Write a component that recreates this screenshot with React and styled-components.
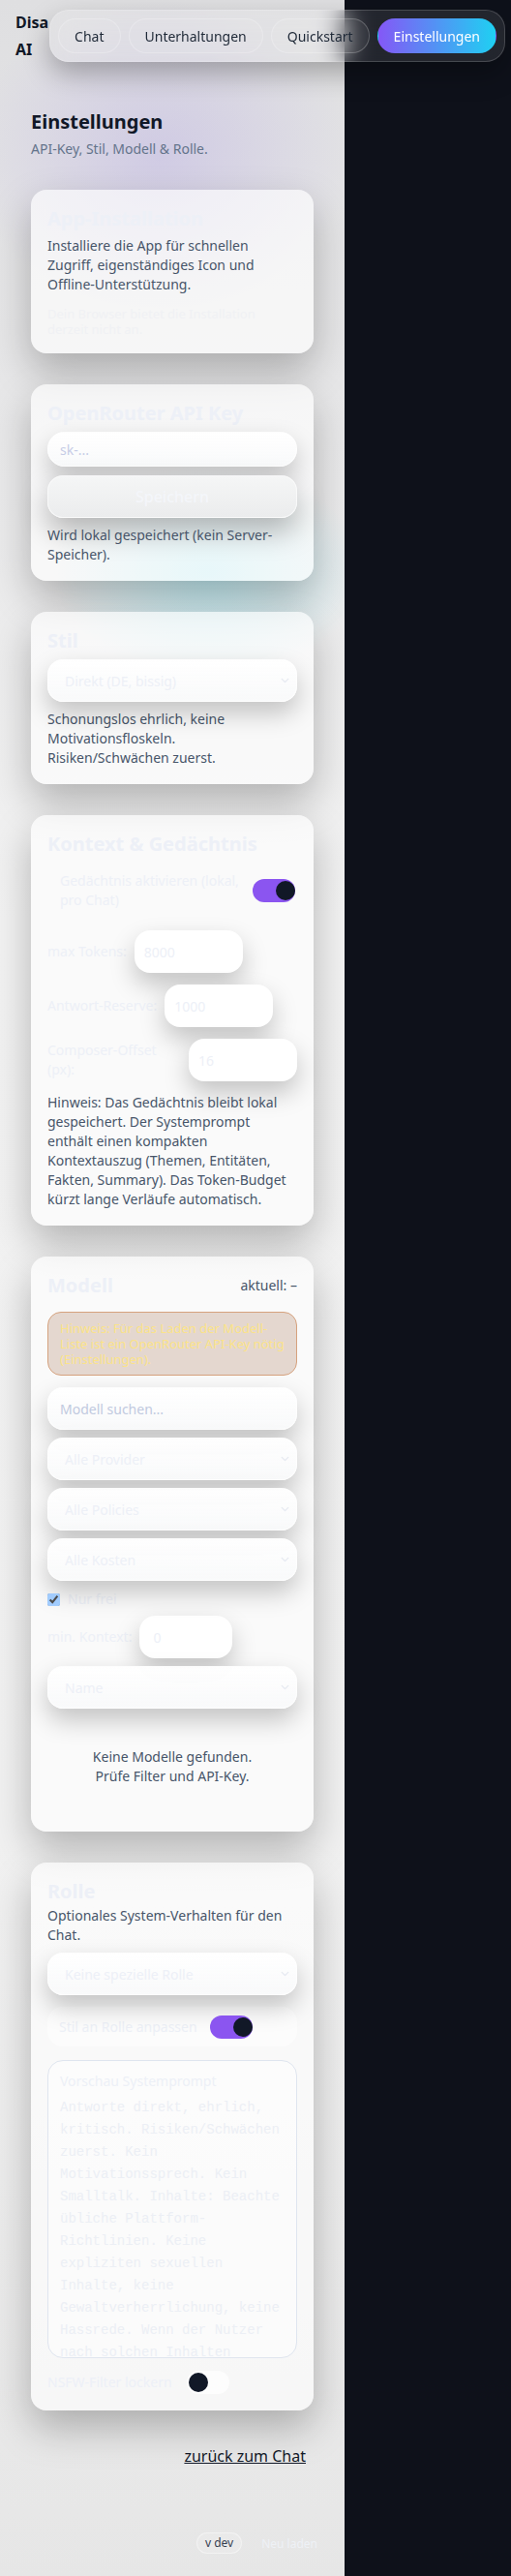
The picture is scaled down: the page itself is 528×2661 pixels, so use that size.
import React from 'react';
import styled, { createGlobalStyle, css } from 'styled-components';
import { ChevronDown } from 'lucide-react';

const GlobalStyle = createGlobalStyle`
  html, body {
    margin: 0;
    padding: 0;
  }
  body {
    background: #0e111a;
    font-family: "Noto Sans", "DejaVu Sans", sans-serif;
    color: #111827;
  }
  * {
    box-sizing: border-box;
  }
`;

const faint = '#edf0f7';

export default function App() {
  return (
    <Shell>
      <GlobalStyle />
      <TopBar>
        <Brand>Disa AI</Brand>
        <Nav>
          <NavButton>Chat</NavButton>
          <NavButton>Unterhaltungen</NavButton>
          <NavButton>Quickstart</NavButton>
          <NavButton $active>Einstellungen</NavButton>
        </Nav>
      </TopBar>

      <Main>
        <PageTitle>Einstellungen</PageTitle>
        <PageSub>API-Key, Stil, Modell &amp; Rolle.</PageSub>

        <Cards>
          <Card>
            <CardTitle>App-Installation</CardTitle>
            <Text $mt={4}>
              Installiere die App für schnellen Zugriff, eigenständiges Icon und
              Offline-Unterstützung.
            </Text>
            <GhostNote>Dein Browser bietet die Installation derzeit nicht an.</GhostNote>
          </Card>

          <Card>
            <CardTitle>OpenRouter API Key</CardTitle>
            <TextInput $pill $mt={5} placeholder="sk-..." />
            <SaveButton>Speichern</SaveButton>
            <Text $mt={8}>Wird lokal gespeichert (kein Server-Speicher).</Text>
          </Card>

          <Card>
            <CardTitle>Stil</CardTitle>
            <SelectBox $mt={5} value="Direkt (DE, bissig)" />
            <Text $mt={8}>
              Schonungslos ehrlich, keine Motivationsfloskeln. Risiken/Schwächen zuerst.
            </Text>
          </Card>

          <Card>
            <CardTitle>Kontext &amp; Gedächtnis</CardTitle>
            <SwitchRow>
              <FaintLabel>Gedächtnis aktivieren (lokal, pro Chat)</FaintLabel>
              <Toggle $on />
            </SwitchRow>
            <NumRows>
              <NumRow>
                <FaintLabel>max Tokens:</FaintLabel>
                <NumInput defaultValue="8000" />
              </NumRow>
              <NumRow>
                <FaintLabel>Antwort-Reserve:</FaintLabel>
                <NumInput defaultValue="1000" />
              </NumRow>
              <NumRow>
                <FaintLabel>Composer-Offset (px):</FaintLabel>
                <NumInput defaultValue="16" />
              </NumRow>
            </NumRows>
            <Text $mt={12}>
              Hinweis: Das Gedächtnis bleibt lokal gespeichert. Der Systemprompt enthält
              einen kompakten Kontextauszug (Themen, Entitäten, Fakten, Summary). Das
              Token-Budget kürzt lange Verläufe automatisch.
            </Text>
          </Card>

          <Card $pb={20}>
            <TitleRow>
              <CardTitle>Modell</CardTitle>
              <Current>aktuell: –</Current>
            </TitleRow>
            <Warning>
              Hinweis: Für das Laden der Modell-Liste ist ein OpenRouter API-Key nötig
              (Einstellungen).
            </Warning>
            <TextInput $mt={12} $placeholderColor="#c1cae0" placeholder="Modell suchen..." />
            <SelectBox $mt={8} value="Alle Provider" />
            <SelectBox $mt={8} value="Alle Policies" />
            <SelectBox $mt={8} value="Alle Kosten" />
            <CheckRow>
              <Check type="checkbox" defaultChecked />
              <FaintLabel>Nur frei</FaintLabel>
            </CheckRow>
            <NumRow $mt={7}>
              <FaintLabel>min. Kontext:</FaintLabel>
              <NumInput $w={96} $pl={13} defaultValue="0" />
            </NumRow>
            <SelectBox $mt={8} value="Name" />
            <Empty>
              Keine Modelle gefunden.
              <br />
              Prüfe Filter und API-Key.
            </Empty>
          </Card>

          <Card>
            <CardTitle>Rolle</CardTitle>
            <Text $mt={1}>Optionales System-Verhalten für den Chat.</Text>
            <SelectBox $mt={8} value="Keine spezielle Rolle" />
            <InlineSwitch>
              <FaintLabel>Stil an Rolle anpassen</FaintLabel>
              <Toggle $on />
            </InlineSwitch>
            <Preview>
              <FaintLabel>Vorschau Systemprompt</FaintLabel>
              <PromptText>
                Antworte direkt, ehrlich, kritisch. Risiken/Schwächen zuerst. Kein
                Motivationssprech. Kein Smalltalk. Inhalte: Beachte übliche
                Plattform-Richtlinien. Keine expliziten sexuellen Inhalte, keine
                Gewaltverherrlichung, keine Hassrede. Wenn der Nutzer nach solchen
                Inhalten fragt, lehne höflich ab.
              </PromptText>
            </Preview>
            <NsfwRow>
              <FaintLabel>NSFW-Filter lockern</FaintLabel>
              <Toggle />
            </NsfwRow>
          </Card>
        </Cards>

        <BackLink href="#">zurück zum Chat</BackLink>

        <Footer>
          <Version>v dev</Version>
          <Reload>Neu laden</Reload>
        </Footer>
      </Main>
      <Aside />
    </Shell>
  );
}

function SelectBox({ value, $mt }) {
  return (
    <SelectWrap $mt={$mt}>
      <Select defaultValue={value}>
        <option>{value}</option>
      </Select>
      <Chevron>
        <ChevronDown size={13} strokeWidth={2.5} />
      </Chevron>
    </SelectWrap>
  );
}

function Toggle({ $on }) {
  return (
    <Track $on={$on}>
      <Knob $on={$on} />
    </Track>
  );
}

const Shell = styled.div`
  position: relative;
  display: flex;
  min-height: 2661px;
`;

const TopBar = styled.header`
  position: absolute;
  top: 0;
  left: 0;
  right: 0;
  z-index: 5;
  display: flex;
  align-items: center;
  padding: 9px 6px 0 16px;
`;

const Brand = styled.div`
  flex: 0 1 auto;
  min-width: 0;
  font-size: 16px;
  font-weight: 700;
  line-height: 28px;
  color: #111827;
`;

const Nav = styled.nav`
  flex-shrink: 0;
  display: flex;
  gap: 8px;
  padding: 8px;
  border-radius: 20px;
  background: rgba(255, 255, 255, 0.09);
  border: 1px solid rgba(255, 255, 255, 0.16);
  box-shadow: 0 12px 28px rgba(0, 0, 0, 0.28);
  backdrop-filter: blur(14px);
`;

const NavButton = styled.button`
  height: 36px;
  padding: 0 16px;
  border-radius: 18px;
  border: 1px solid rgba(255, 255, 255, 0.22);
  background: rgba(255, 255, 255, 0.05);
  color: #1f2937;
  font-family: inherit;
  font-size: 14px;
  white-space: nowrap;
  cursor: pointer;

  ${(p) =>
    p.$active &&
    css`
      border-color: transparent;
      background: linear-gradient(90deg, #8458f6, #1fd0f2);
      color: #fff;
    `}
`;

const Main = styled.main`
  width: 356px;
  flex-shrink: 0;
  display: flex;
  flex-direction: column;
  padding: 112px 32px 25px;
  background:
    radial-gradient(ellipse 200px 160px at 165px 160px, rgba(150, 128, 228, 0.24), transparent),
    radial-gradient(ellipse 160px 110px at 215px 590px, rgba(60, 228, 252, 0.26), transparent),
    linear-gradient(180deg, #dfdfe1 0, #f2f2f2 950px, #f1f1f1 1900px, #e6e6e6 100%);
`;

const Aside = styled.aside`
  flex: 1;
  background: #0e111a;
`;

const PageTitle = styled.h1`
  margin: 0;
  font-size: 20px;
  line-height: 28px;
  font-weight: 700;
  color: #111827;
`;

const PageSub = styled.p`
  margin: 4px 0 0;
  font-size: 14px;
  line-height: 20px;
  color: #64748b;
`;

const Cards = styled.div`
  display: flex;
  flex-direction: column;
  gap: 32px;
  margin-top: 32px;
`;

const Card = styled.section`
  display: flex;
  flex-direction: column;
  padding: 16px 17px ${(p) => p.$pb || 17}px;
  border-radius: 16px;
  background: rgba(255, 255, 255, 0.64);
  box-shadow: 0 18px 40px rgba(0, 0, 0, 0.26);
`;

const CardTitle = styled.h2`
  margin: 0;
  font-size: 20px;
  line-height: 28px;
  font-weight: 700;
  color: ${faint};
`;

const Text = styled.p`
  margin: ${(p) => p.$mt || 0}px 0 0;
  font-size: 14px;
  line-height: 20px;
  color: #475569;
`;

const GhostNote = styled.p`
  margin: 12px 0 0;
  font-size: 13px;
  line-height: 16px;
  color: #f0f1f4;
`;

const fieldBase = css`
  display: block;
  width: 100%;
  border: 1px solid rgba(255, 255, 255, 0.7);
  background: linear-gradient(180deg, rgba(255, 255, 255, 0.95), rgba(248, 249, 250, 0.9));
  box-shadow: 0 12px 26px rgba(0, 0, 0, 0.22);
  font-family: inherit;
  font-size: 14px;
  color: ${faint};
  outline: none;
`;

const TextInput = styled.input`
  ${fieldBase}
  margin-top: ${(p) => p.$mt || 0}px;
  height: ${(p) => (p.$pill ? 36 : 44)}px;
  border-radius: ${(p) => (p.$pill ? 18 : 16)}px;
  padding: 0 12px;

  &::placeholder {
    color: ${(p) => p.$placeholderColor || '#c6cce6'};
  }
`;

const SaveButton = styled.button`
  margin-top: 9px;
  height: 44px;
  border-radius: 16px;
  border: 1px solid rgba(255, 255, 255, 0.6);
  background: linear-gradient(180deg, #f5f6f6, #ebeced);
  box-shadow: 0 14px 30px rgba(0, 0, 0, 0.28);
  font-family: inherit;
  font-size: 16px;
  font-weight: 500;
  color: #f4f6fa;
  cursor: pointer;
`;

const SelectWrap = styled.div`
  position: relative;
  margin-top: ${(p) => p.$mt || 0}px;
`;

const Select = styled.select`
  ${fieldBase}
  appearance: none;
  height: 44px;
  border-radius: 16px;
  padding: 0 30px 0 17px;
`;

const Chevron = styled.span`
  position: absolute;
  right: 6px;
  top: 50%;
  transform: translateY(-50%);
  display: flex;
  color: #e6eaf1;
  pointer-events: none;
`;

const FaintLabel = styled.span`
  font-size: 14px;
  line-height: 20px;
  color: ${faint};
`;

const SwitchRow = styled.div`
  display: flex;
  align-items: center;
  justify-content: space-between;
  gap: 10px;
  margin-top: 14px;
  padding: 0 2px 0 13px;
`;

const Track = styled.span`
  position: relative;
  flex-shrink: 0;
  width: 44px;
  height: 24px;
  border-radius: 12px;
  background: ${(p) => (p.$on ? '#8b55f0' : 'rgba(255, 255, 255, 0.75)')};
`;

const Knob = styled.span`
  position: absolute;
  top: 2px;
  ${(p) => (p.$on ? 'right: 0;' : 'left: 2px;')}
  width: 20px;
  height: 20px;
  border-radius: 50%;
  background: #111827;
`;

const NumRows = styled.div`
  display: flex;
  flex-direction: column;
  gap: 12px;
  margin-top: 21px;
`;

const NumRow = styled.div`
  display: flex;
  align-items: center;
  gap: 8px;
  margin-top: ${(p) => p.$mt || 0}px;
`;

const NumInput = styled.input`
  ${fieldBase}
  flex-shrink: 0;
  width: ${(p) => p.$w || 112}px;
  height: 44px;
  border-radius: 16px;
  padding: 0 0 0 ${(p) => p.$pl || 9}px;
  background: #fff;
`;

const TitleRow = styled.div`
  display: flex;
  align-items: center;
  justify-content: space-between;
`;

const Current = styled.span`
  font-size: 14px;
  line-height: 20px;
  color: #475569;
`;

const Warning = styled.div`
  margin-top: 13px;
  padding: 8px 12px;
  border: 1px solid #d6a27e;
  border-radius: 14px;
  background: #e4d7cf;
  font-size: 13px;
  line-height: 16px;
  color: #fbe389;
`;

const CheckRow = styled.label`
  display: flex;
  align-items: center;
  gap: 8px;
  margin-top: 9px;
`;

const Check = styled.input`
  margin: 0;
  width: 13px;
  height: 13px;
  color-scheme: dark;
  opacity: 0.9;
`;

const Empty = styled.div`
  padding: 40px 0 27px;
  text-align: center;
  font-size: 14px;
  line-height: 20px;
  color: #475569;
`;

const InlineSwitch = styled.div`
  display: flex;
  align-items: center;
  gap: 13px;
  height: 41px;
  margin-top: 12px;
  padding: 0 12px;
  border-radius: 16px;
  background: rgba(255, 255, 255, 0.55);
`;

const Preview = styled.div`
  display: flex;
  flex-direction: column;
  height: 308px;
  margin-top: 14px;
  padding: 11px 12px 0;
  border: 1px solid #dfe5ef;
  border-radius: 16px;
  background: rgba(255, 255, 255, 0.45);
  overflow: hidden;
`;

const PromptText = styled.pre`
  margin: 6px 0 0;
  font-family: "Liberation Mono", "DejaVu Sans Mono", monospace;
  font-size: 14px;
  line-height: 23px;
  white-space: pre-wrap;
  color: #eceff5;
`;

const NsfwRow = styled.div`
  display: flex;
  align-items: center;
  gap: 15px;
  margin-top: 13px;
`;

const BackLink = styled.a`
  align-self: flex-end;
  margin: 35px 8px 0 0;
  font-size: 16px;
  line-height: 24px;
  color: #111827;
  text-decoration: underline;
`;

const Footer = styled.footer`
  display: flex;
  align-items: center;
  justify-content: flex-end;
  gap: 20px;
  margin: 67px -4px 0 0;
`;

const Version = styled.span`
  height: 22px;
  padding: 0 8px;
  border-radius: 11px;
  border: 1px solid rgba(255, 255, 255, 0.4);
  background: rgba(255, 255, 255, 0.15);
  font-size: 12px;
  line-height: 20px;
  color: #374151;
`;

const Reload = styled.button`
  padding: 0;
  border: none;
  background: none;
  font-family: inherit;
  font-size: 12px;
  color: #eef1f6;
  cursor: pointer;
`;
